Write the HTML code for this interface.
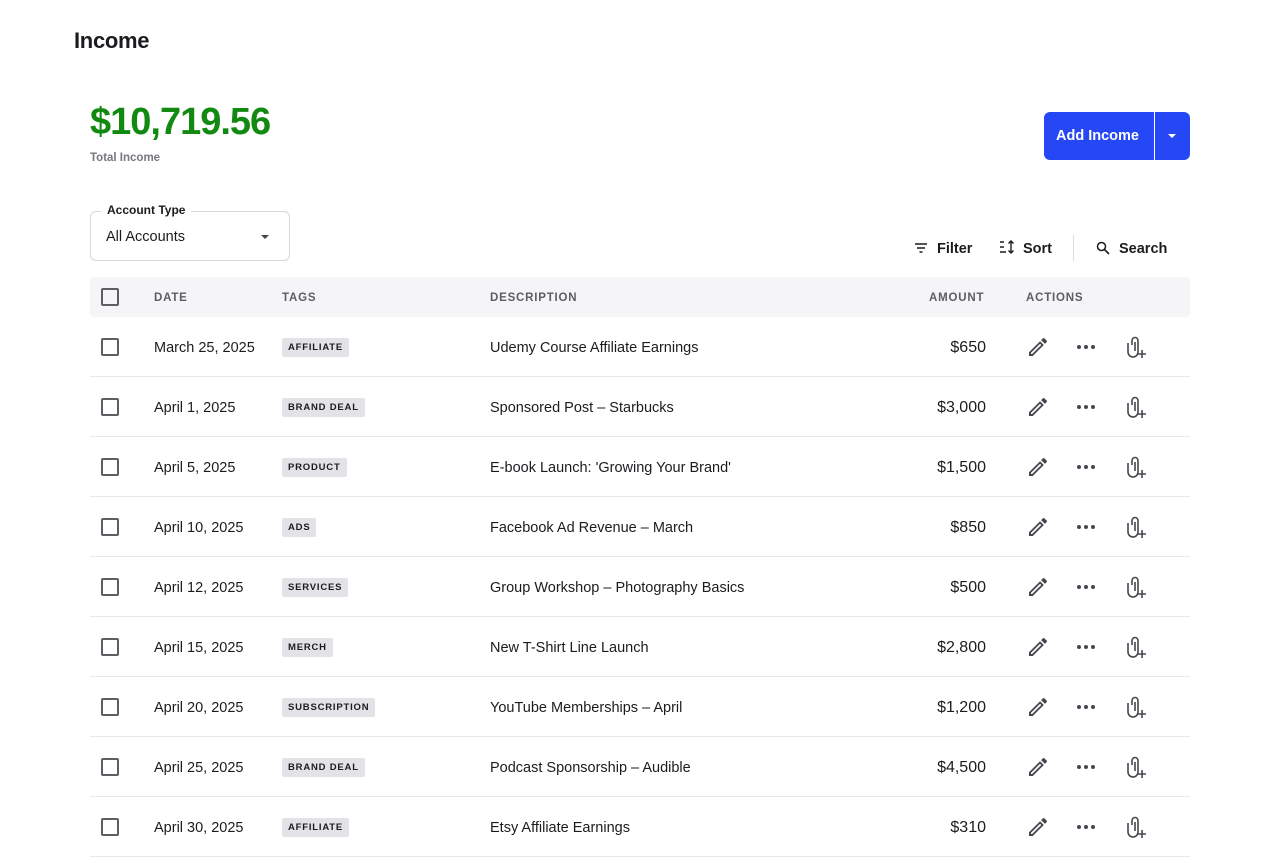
<!DOCTYPE html>
<html><head><meta charset="utf-8"><style>
*{box-sizing:border-box;margin:0;padding:0}
body{width:1280px;height:832px;overflow:hidden;background:#fff;font-family:"Liberation Sans",sans-serif;color:#1c1b1f;position:relative}
.abs{position:absolute}
h1{position:absolute;left:74px;top:28px;font-size:22px;font-weight:700;letter-spacing:-0.3px}
.total{left:90px;top:101px;font-size:38px;font-weight:700;color:#128a12;letter-spacing:-1px}
.tl{left:90px;top:152px;font-size:11.5px;font-weight:700;color:#79767d}
.btn{left:1044px;top:112px;width:146px;height:48px;background:#2547f5;border-radius:6px;color:#fff}
.btn .t{position:absolute;left:12px;top:16px;font-size:14.5px;font-weight:700}
.btn .sep{position:absolute;left:110px;top:0;width:1px;height:48px;background:#fff}
.btn .car{position:absolute;left:124px;top:22px;border-left:4px solid transparent;border-right:4px solid transparent;border-top:4px solid #fff}
.sel{left:90px;top:211px;width:200px;height:50px;border:1px solid #d7d5da;border-radius:6px}
.sel .lab{position:absolute;left:10px;top:-9px;background:#fff;padding:0 6px;font-size:12px;font-weight:700}
.sel .v{position:absolute;left:15px;top:17px;font-size:14.5px}
.sel .car{position:absolute;left:170px;top:23px;border-left:4px solid transparent;border-right:4px solid transparent;border-top:4px solid #49454f}
.tb{top:241px;font-size:14.5px;font-weight:700}
.thead{left:90px;top:277px;width:1100px;height:40px;background:#f5f4f7;border-radius:4px}
.th{position:absolute;top:15px;font-size:11.5px;font-weight:700;color:#5f5d63;letter-spacing:0.8px}
.cb{position:absolute;left:11px;width:18px;height:18px;border:2px solid #605d64;border-radius:2px}
.row{position:absolute;left:90px;width:1100px;height:60px;border-bottom:1px solid #e8e7ea}
.row .d{position:absolute;left:64px;top:23px;font-size:14.5px}
.row .tag{position:absolute;left:192px;top:21px;height:19px;padding:0 6px;background:#e3e2e6;border-radius:2px;font-size:9.5px;font-weight:700;letter-spacing:0.8px;line-height:19px}
.row .ds{position:absolute;left:400px;top:23px;font-size:14.5px}
.row .am{position:absolute;right:204px;top:22px;font-size:16px}
.row svg{position:absolute}
</style></head><body>
<h1>Income</h1>
<div class="abs total">$10,719.56</div>
<div class="abs tl">Total Income</div>
<div class="abs btn"><span class="t">Add Income</span><span class="sep"></span><span class="car"></span></div>
<div class="abs sel"><span class="lab">Account Type</span><span class="v">All Accounts</span><span class="car"></span></div>
<svg class="abs" style="left:914px;top:242px" width="14" height="12" viewBox="0 0 14 12"><path d="M1 2h12M3 6h8M5.5 10h3" stroke="#1c1b1f" stroke-width="1.4"/></svg>
<div class="abs tb" style="left:937px">Filter</div>
<svg class="abs" style="left:999px;top:240px" width="16" height="14" viewBox="0 0 16 14"><path d="M1 2h4M1 7h4M1 12h6M12 1v12M9.5 3.5L12 1l2.5 2.5M9.5 10.5L12 13l2.5-2.5" stroke="#1c1b1f" stroke-width="1.4" fill="none"/></svg>
<div class="abs tb" style="left:1023px">Sort</div>
<div class="abs" style="left:1073px;top:235px;width:1px;height:26px;background:#ddd"></div>
<svg class="abs" style="left:1096px;top:241px" width="14" height="14" viewBox="0 0 14 14"><circle cx="5.5" cy="5.5" r="4" stroke="#1c1b1f" stroke-width="1.5" fill="none"/><path d="M8.5 8.5L13 13" stroke="#1c1b1f" stroke-width="1.6"/></svg>
<div class="abs tb" style="left:1119px">Search</div>
<div class="abs thead">
<div class="cb" style="top:11px"></div>
<span class="th" style="left:64px">DATE</span>
<span class="th" style="left:192px">TAGS</span>
<span class="th" style="left:400px">DESCRIPTION</span>
<span class="th" style="left:839px">AMOUNT</span>
<span class="th" style="left:936px">ACTIONS</span>
</div>
<div id="rows"></div>
<script>
var d=[["March 25, 2025","AFFILIATE","Udemy Course Affiliate Earnings","$650"],["April 1, 2025","BRAND DEAL","Sponsored Post – Starbucks","$3,000"],["April 5, 2025","PRODUCT","E-book Launch: 'Growing Your Brand'","$1,500"],["April 10, 2025","ADS","Facebook Ad Revenue – March","$850"],["April 12, 2025","SERVICES","Group Workshop – Photography Basics","$500"],["April 15, 2025","MERCH","New T-Shirt Line Launch","$2,800"],["April 20, 2025","SUBSCRIPTION","YouTube Memberships – April","$1,200"],["April 25, 2025","BRAND DEAL","Podcast Sponsorship – Audible","$4,500"],["April 30, 2025","AFFILIATE","Etsy Affiliate Earnings","$310"]];
var h="";
d.forEach(function(r,i){
h+='<div class="row" style="top:'+(317+i*60)+'px"><div class="cb" style="top:21px"></div><span class="d">'+r[0]+'</span><span class="tag">'+r[1]+'</span><span class="ds">'+r[2]+'</span><span class="am">'+r[3]+'</span>'+
'<svg style="left:936px;top:18px" width="24" height="24" viewBox="0 0 24 24"><path d="M3 17.25V21h3.75L17.81 9.94l-3.75-3.75L3 17.25zM20.71 7.04a1 1 0 000-1.41l-2.34-2.34a1 1 0 00-1.41 0l-1.83 1.83 3.75 3.75 1.83-1.83z" fill="#49454f"/><path d="M5 19l0-1.2 9.06-9.06 1.2 1.2L6.2 19z" fill="#fff"/></svg>'+
'<svg style="left:986px;top:26px" width="20" height="8" viewBox="0 0 20 8"><circle cx="3" cy="4" r="2" fill="#49454f"/><circle cx="10" cy="4" r="2" fill="#49454f"/><circle cx="17" cy="4" r="2" fill="#49454f"/></svg>'+
'<svg style="left:1036px;top:19px" width="22" height="24" viewBox="0 0 22 24"><path d="M6 9V4.5a3 3 0 016 0V16a5 5 0 01-5 5h0a5 5 0 01-5-5V7M9 6v9" stroke="#49454f" stroke-width="1.6" fill="none"/><path d="M16 14v8M12 18h8" stroke="#49454f" stroke-width="1.6"/></svg></div>';
});
document.getElementById("rows").innerHTML=h;
</script>
</body></html>
